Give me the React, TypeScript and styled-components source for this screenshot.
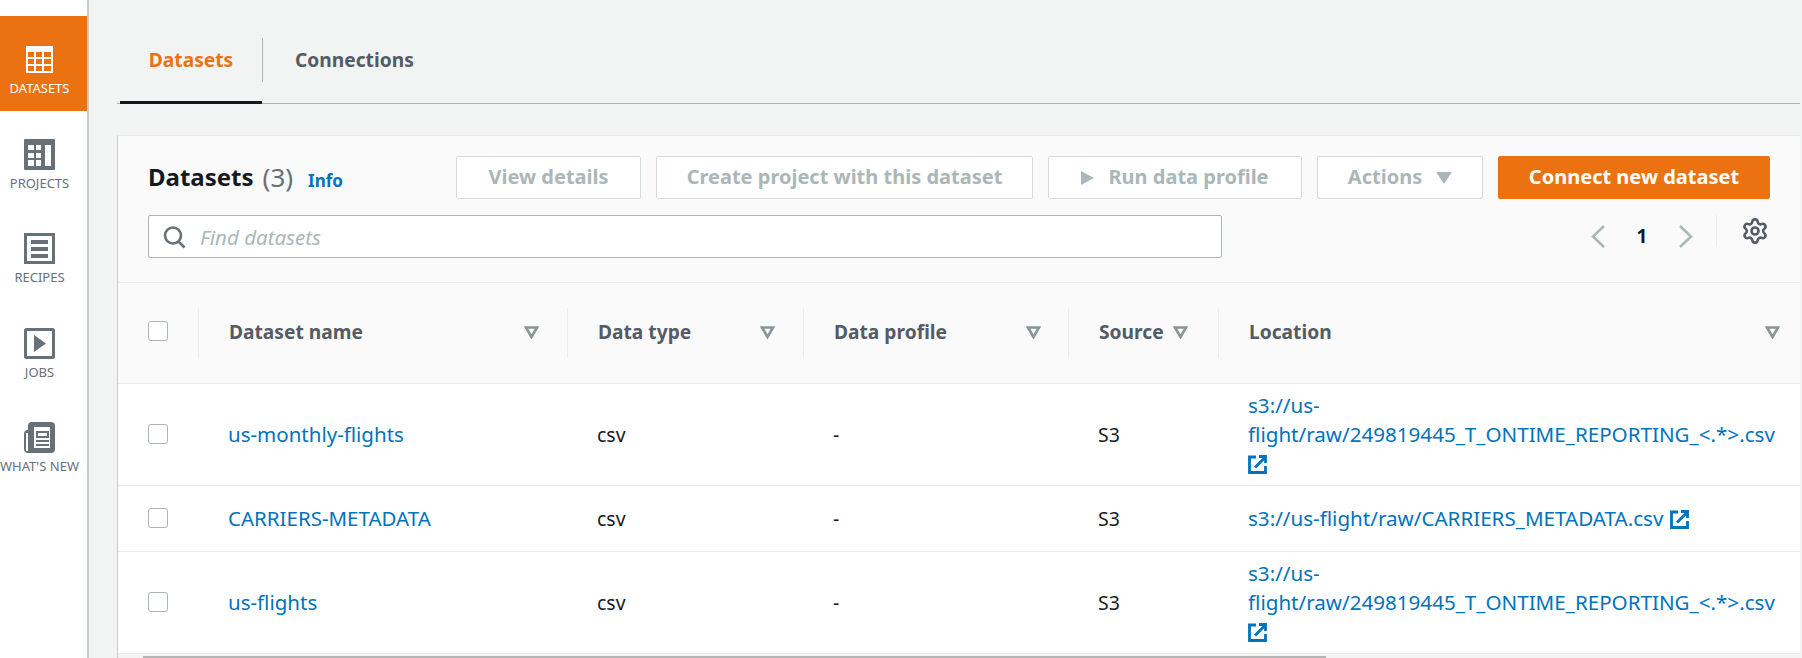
import React from 'react';
import styled, { createGlobalStyle } from 'styled-components';
import { Settings } from 'lucide-react';

const Global = createGlobalStyle`
  html, body {
    margin: 0;
    padding: 0;
    background: #f2f3f3;
    font-family: "Noto Sans", "Liberation Sans", sans-serif;
  }
  * { box-sizing: border-box; }
`;

const Page = styled.div`
  display: flex;
  width: 1802px;
  height: 658px;
  overflow: hidden;
`;

const Sidebar = styled.nav`
  flex: none;
  width: 89px;
  height: 658px;
  padding-top: 16px;
  background: #fff;
  border-right: 2px solid #c6cccc;
`;

const SideItem = styled.a<{ $active?: boolean }>`
  display: flex;
  flex-direction: column;
  align-items: center;
  height: 94.6px;
  padding: 28px 8px 0 0;
  font-size: 13px;
  line-height: 16px;
  white-space: nowrap;
  color: ${(p) => (p.$active ? '#fff' : '#687078')};
  background: ${(p) => (p.$active ? '#ec7211' : 'transparent')};
  svg { flex: none; margin-bottom: 5px; }
`;

const Main = styled.main`
  flex: 1;
  min-width: 0;
  padding: 0 2px 0 28px;
`;

const Tabs = styled.div`
  display: flex;
  align-items: flex-start;
  height: 104px;
  padding: 38px 0 0 3px;
  border-bottom: 1px solid #aab7b8;
`;

const Tab = styled.a<{ $active?: boolean }>`
  display: flex;
  align-items: center;
  height: 66px;
  padding: 0 0 ${(p) => (p.$active ? 20 : 23)}px;
  font-size: 19.2px;
  font-weight: 700;
  color: ${(p) => (p.$active ? '#ec7211' : '#545b64')};
  ${(p) => p.$active && 'width: 142px; justify-content: center; border-bottom: 3px solid #16191f;'}
`;

const TabDivider = styled.span`
  width: 1px;
  height: 44px;
  margin-right: 32px;
  background: #aab7b8;
`;

const Card = styled.section`
  margin-top: 31px;
  background: #fff;
  border-left: 1px solid #c6cccc;
  border-top: 1px solid #eaeded;
`;

const CardHead = styled.header`
  height: 147px;
  padding: 20px 30px 0 30px;
  background: #fafafa;
  border-bottom: 1px solid #eaeded;
`;

const TopRow = styled.div`
  display: flex;
  align-items: center;
  height: 43px;
`;

const Title = styled.h1`
  margin: 0 0 2px;
  font-size: 24px;
  line-height: 30px;
  font-weight: 700;
  color: #16191f;
`;

const Count = styled.span`
  margin: 0 0 2px 9px;
  font-size: 26px;
  color: #687078;
`;

const InfoLink = styled.a`
  margin-left: 15px;
  margin-top: 5px;
  font-size: 17px;
  font-weight: 700;
  color: #0073bb;
`;

const Actions = styled.div`
  display: flex;
  gap: 15px;
  margin-left: auto;
`;

const Button = styled.button<{ $w: number; $primary?: boolean }>`
  display: flex;
  align-items: center;
  justify-content: center;
  gap: 14px;
  width: ${(p) => p.$w}px;
  height: 43px;
  padding: 0 0 2px;
  font-family: inherit;
  font-size: 20px;
  font-weight: 700;
  border-radius: 2px;
  color: ${(p) => (p.$primary ? '#fff' : '#aab7b8')};
  background: ${(p) => (p.$primary ? '#ec7211' : '#fff')};
  border: 1px solid ${(p) => (p.$primary ? '#ec7211' : '#d5dbdb')};
  svg { margin-top: 2px; }
`;

const SearchRow = styled.div`
  display: flex;
  align-items: flex-start;
  margin-top: 16px;
`;

const SearchBox = styled.div`
  display: flex;
  align-items: center;
  gap: 14px;
  width: 1074px;
  height: 43px;
  padding-left: 13px;
  background: #fff;
  border: 1px solid #aab7b8;
  border-radius: 2px;
`;

const Placeholder = styled.span`
  font-size: 20.500px;
  font-style: italic;
  color: #aab7b8;
`;

const Pager = styled.div`
  display: flex;
  align-items: flex-start;
  margin-left: auto;
`;

const PageNumber = styled.span`
  width: 74px;
  margin-top: 6px;
  font-size: 19px;
  font-weight: 700;
  line-height: 30px;
  text-align: center;
  color: #16191f;
`;

const Chevron = styled.svg`
  margin-top: 10px;
`;

const PagerDivider = styled.span`
  width: 1px;
  height: 32px;
  margin: 0 24px 0 23px;
  background: #eaeded;
`;

const GearSlot = styled.span`
  display: block;
  width: 28px;
  height: 28px;
  margin: 2px 1px 0 0;
  color: #545b64;
`;

const Table = styled.table`
  width: 100%;
  border-collapse: collapse;
  table-layout: fixed;
`;

const HeadCell = styled.th<{ $w?: number }>`
  ${(p) => p.$w && `width: ${p.$w}px;`}
  height: 100px;
  padding: 0;
  text-align: left;
  background: #fafafa;
  border-bottom: 1px solid #eaeded;
`;

const HeadInner = styled.div<{ $pr: number }>`
  display: flex;
  align-items: center;
  justify-content: space-between;
  height: 50px;
  padding: 0 ${(p) => p.$pr}px 2px 30px;
  font-size: 19.2px;
  font-weight: 700;
  color: #545b64;
  border-left: 1px solid #eaeded;
  svg { margin-top: 2px; }
`;

const Row = styled.tr<{ $h: number }>`
  height: ${(p) => p.$h}px;
`;

const Cell = styled.td`
  padding: 0 0 0 30px;
  font-size: 19.500px;
  line-height: 29px;
  color: #16191f;
  border-bottom: 1px solid #eaeded;
  vertical-align: middle;
`;

const Link = styled.a`
  font-size: 20.500px;
  color: #0073bb;
`;

const LocationLink = styled(Link)`
  display: block;
  width: 560px;
  font-size: 20.600px;
`;

const ExternalIcon = styled.svg`
  display: inline-block;
  margin-left: 7px;
  vertical-align: -3px;
`;

const LinkBreak = styled.span`
  display: block;
  svg { margin-left: 0; }
`;

const Checkbox = styled.span<{ $head?: boolean }>`
  display: block;
  width: 20px;
  height: 20px;
  margin: ${(p) => (p.$head ? '0 0 4px 30px' : '0')};
  background: #fff;
  border: 1.5px solid #aab7b8;
  border-radius: 3px;
`;

const ScrollTrack = styled.div`
  height: 6px;
  padding: 2px 0 0 25px;
  background: #f4f4f4;
`;

const ScrollThumb = styled.div`
  width: 1183px;
  height: 4px;
  background: #b4b4b4;
`;

const DatasetsIcon = () => (
  <svg width="31" height="31" viewBox="-2 -2 31 31">
    <path
      fill="#fff"
      fillRule="evenodd"
      d="M0 0h27v27H0z M2 6v5h6V6z M10 6v5h6V6z M18 6v5h7V6z M2 13v5h6v-5z M10 13v5h6v-5z M18 13v5h7v-5z M2 20v5h6v-5z M10 20v5h6v-5z M18 20v5h7v-5z"
    />
  </svg>
);

const ProjectsIcon = () => (
  <svg width="31" height="31" viewBox="0 0 31 31">
    <rect width="31" height="31" rx="1" fill="#687078" />
    <path
      fill="#fff"
      d="M4 6h6v5H4z M12 6h5v5h-5z M4 14h6v5H4z M12 14h5v5h-5z M4 21h6v6H4z M12 21h5v6h-5z M21 6h6v21h-6z"
    />
  </svg>
);

const RecipesIcon = () => (
  <svg width="31" height="31" viewBox="0 0 31 31">
    <rect x="1.500" y="1.500" width="28" height="28" fill="#fff" stroke="#687078" strokeWidth="3" />
    <path fill="#687078" d="M7 7h17v4H7z M7 14h17v4H7z M7 21h17v4H7z" />
  </svg>
);

const JobsIcon = () => (
  <svg width="31" height="31" viewBox="0 0 31 31">
    <rect x="1.500" y="1.500" width="28" height="28" rx="1" fill="#fff" stroke="#687078" strokeWidth="3" />
    <path fill="#687078" d="M10 7l12 8.500L10 24z" />
  </svg>
);

const NewsIcon = () => (
  <svg width="31" height="31" viewBox="0 0 31 31">
    <path
      fill="#687078"
      d="M8 0h19a4 4 0 0 1 4 4v23a4 4 0 0 1-4 4H4a4 4 0 0 1-4-4V12a4 4 0 0 1 4-4V4a4 4 0 0 1 4-4z"
    />
    <path fill="#fff" d="M2 11h2v18H2z M10 5h16v21H10z" />
    <path
      fill="#687078"
      fillRule="evenodd"
      d="M12 9h13v7H12z M14 11v3h9v-3z M12 18h13v2H12z M12 22h13v2H12z"
    />
  </svg>
);

const SearchIcon = () => (
  <svg width="24" height="24" viewBox="0 0 24 24" fill="none" stroke="#687078" strokeWidth="2.600">
    <circle cx="11" cy="10.500" r="8" />
    <path d="M16.500 16.500l6 6" />
  </svg>
);

const FilterIcon = () => (
  <svg width="15" height="13" viewBox="0 0 15 13" fill="none" stroke="#879596" strokeWidth="2.600">
    <path d="M2 1.500h11L7.500 11z" />
  </svg>
);

const External = () => (
  <ExternalIcon width="19" height="19" viewBox="0 0 19 19" fill="none" stroke="#0073bb" strokeWidth="2.800">
    <path d="M8 2H1.500v15.500H17.500V11" />
    <path d="M7 12.500L16.500 3" />
    <path d="M11 1.500h6.500V8" />
  </ExternalIcon>
);

const PlayGlyph = () => (
  <svg width="13" height="14" viewBox="0 0 13 14">
    <path fill="#aab7b8" d="M0 0l13 7L0 14z" />
  </svg>
);

const CaretGlyph = () => (
  <svg width="16" height="12" viewBox="0 0 16 12">
    <path fill="#aab7b8" d="M0 0h16L8 12z" />
  </svg>
);

const navItems = [
  { label: 'DATASETS', icon: <DatasetsIcon />, active: true },
  { label: 'PROJECTS', icon: <ProjectsIcon /> },
  { label: 'RECIPES', icon: <RecipesIcon /> },
  { label: 'JOBS', icon: <JobsIcon /> },
  { label: "WHAT'S NEW", icon: <NewsIcon /> },
];

const columns = [
  { title: 'Dataset name', w: 369, pr: 28 },
  { title: 'Data type', w: 236, pr: 28 },
  { title: 'Data profile', w: 265, pr: 27 },
  { title: 'Source', w: 150, pr: 30 },
  { title: 'Location', pr: 20 },
];

const LONG_PATH = ['s3://us-', 'flight/raw/249819445_T_ONTIME_REPORTING_<.*>.csv'];

const rows = [
  { name: 'us-monthly-flights', h: 102, location: LONG_PATH },
  { name: 'CARRIERS-METADATA', h: 66, location: ['s3://us-flight/raw/CARRIERS_METADATA.csv'] },
  { name: 'us-flights', h: 102, location: LONG_PATH },
];

export default function App() {
  return (
    <Page>
      <Global />
      <Sidebar>
        {navItems.map((item) => (
          <SideItem key={item.label} $active={item.active}>
            {item.icon}
            {item.label}
          </SideItem>
        ))}
      </Sidebar>
      <Main>
        <Tabs>
          <Tab $active>Datasets</Tab>
          <TabDivider />
          <Tab>Connections</Tab>
        </Tabs>
        <Card>
          <CardHead>
            <TopRow>
              <Title>Datasets</Title>
              <Count>(3)</Count>
              <InfoLink>Info</InfoLink>
              <Actions>
                <Button $w={185}>View details</Button>
                <Button $w={377}>Create project with this dataset</Button>
                <Button $w={254}>
                  <PlayGlyph />
                  Run data profile
                </Button>
                <Button $w={166}>
                  Actions
                  <CaretGlyph />
                </Button>
                <Button $w={272} $primary>
                  Connect new dataset
                </Button>
              </Actions>
            </TopRow>
            <SearchRow>
              <SearchBox>
                <SearchIcon />
                <Placeholder>Find datasets</Placeholder>
              </SearchBox>
              <Pager>
                <Chevron width="14" height="23" viewBox="0 0 14 23" fill="none" stroke="#aab7b8" strokeWidth="2.500">
                  <path d="M13 1L2 11.500 13 22" />
                </Chevron>
                <PageNumber>1</PageNumber>
                <Chevron width="14" height="23" viewBox="0 0 14 23" fill="none" stroke="#aab7b8" strokeWidth="2.500">
                  <path d="M1 1l11 10.500L1 22" />
                </Chevron>
                <PagerDivider />
                <GearSlot>
                  <Settings size={28} strokeWidth={2.2} />
                </GearSlot>
              </Pager>
            </SearchRow>
          </CardHead>
          <Table>
            <thead>
              <tr>
                <HeadCell $w={80}>
                  <Checkbox $head />
                </HeadCell>
                {columns.map((col) => (
                  <HeadCell key={col.title} $w={col.w}>
                    <HeadInner $pr={col.pr}>
                      {col.title}
                      <FilterIcon />
                    </HeadInner>
                  </HeadCell>
                ))}
              </tr>
            </thead>
            <tbody>
              {rows.map((row) => (
                <Row key={row.name} $h={row.h}>
                  <Cell>
                    <Checkbox />
                  </Cell>
                  <Cell>
                    <Link>{row.name}</Link>
                  </Cell>
                  <Cell>csv</Cell>
                  <Cell>-</Cell>
                  <Cell>S3</Cell>
                  <Cell>
                    {row.location.length > 1 ? (
                      <LocationLink>
                        {row.location.map((line) => (
                          <LinkBreak key={line}>{line}</LinkBreak>
                        ))}
                        <LinkBreak>
                          <External />
                        </LinkBreak>
                      </LocationLink>
                    ) : (
                      <LocationLink>
                        {row.location[0]}
                        <External />
                      </LocationLink>
                    )}
                  </Cell>
                </Row>
              ))}
            </tbody>
          </Table>
          <ScrollTrack>
            <ScrollThumb />
          </ScrollTrack>
        </Card>
      </Main>
    </Page>
  );
}
